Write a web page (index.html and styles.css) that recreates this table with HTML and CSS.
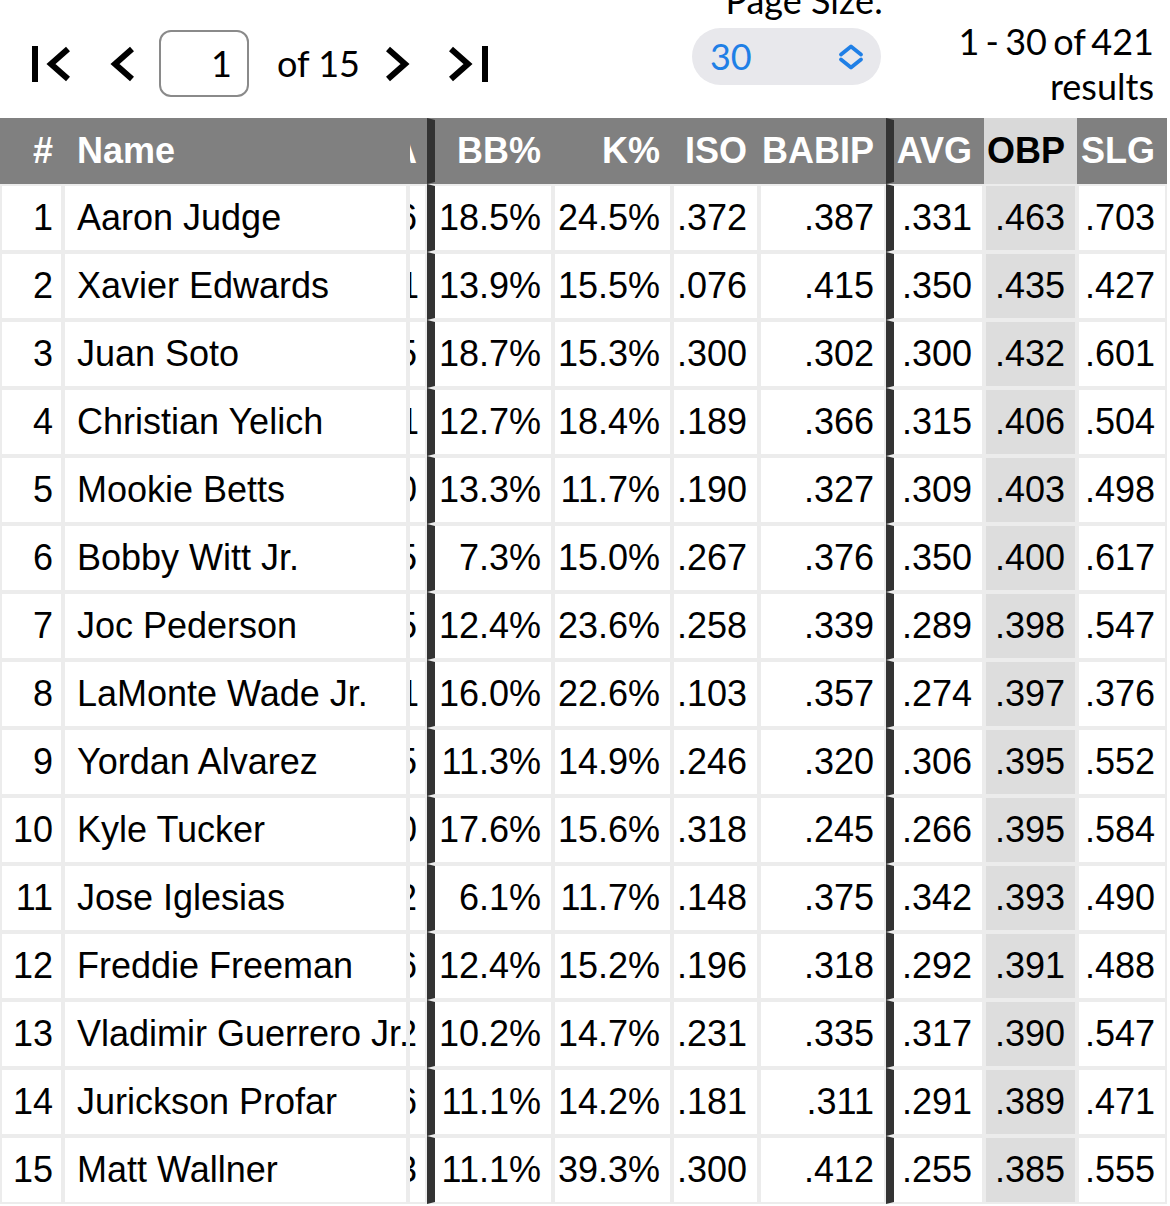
FILE: index.html
```html
<!DOCTYPE html>
<html lang="en">
<head>
<meta charset="utf-8">
<title>Leaderboard</title>
<link rel="stylesheet" href="styles.css">
</head>
<body>
<div class="topbar">
  <div class="pager">
    <svg class="ico ico-first" width="38" height="36" viewBox="0 0 38 36"><rect x="0" y="0" width="6" height="36" fill="#000"/><path d="M36 3 L19 18 L36 33" stroke="#000" stroke-width="6" fill="none"/></svg>
    <svg class="ico ico-prev" width="24" height="36" viewBox="0 0 24 36"><path d="M22 3 L5 18 L22 33" stroke="#000" stroke-width="6" fill="none"/></svg>
    <div class="pagebox">1</div>
    <span class="of">of 15</span>
    <svg class="ico ico-next" width="24" height="36" viewBox="0 0 24 36"><path d="M2 3 L19 18 L2 33" stroke="#000" stroke-width="6" fill="none"/></svg>
    <svg class="ico ico-last" width="39" height="36" viewBox="0 0 39 36"><path d="M2 3 L19 18 L2 33" stroke="#000" stroke-width="6" fill="none"/><rect x="33" y="0" width="6" height="36" fill="#000"/></svg>
  </div>
  <div class="pagesize">
    <div class="ps-label">Page Size:</div>
    <div class="ps-select">
      <span class="ps-value">30</span>
      <svg class="ps-chev" width="26" height="26" viewBox="0 0 26 26"><path d="M3 10.5 L13 2.5 L23 10.5 M3 15.5 L13 23.5 L23 15.5" stroke="#1f7fe6" stroke-width="3.8" fill="none" stroke-linecap="round" stroke-linejoin="round"/></svg>
    </div>
  </div>
  <div class="results">1 - 30 of 421<br>results</div>
</div>

<table class="board">
  <thead>
    <tr>
      <th class="c-rank">#</th>
      <th class="c-name">Name</th>
      <th class="c-cut"><div class="clip"><span>PA</span></div></th>
      <th class="c-bb grp">BB%</th>
      <th class="c-k">K%</th>
      <th class="c-iso">ISO</th>
      <th class="c-babip">BABIP</th>
      <th class="c-avg grp">AVG</th>
      <th class="c-obp sel">OBP</th>
      <th class="c-slg">SLG</th>
    </tr>
  </thead>
  <tbody>
    <tr><td class="c-rank">1</td><td class="c-name">Aaron Judge</td><td class="c-cut"><div class="clip"><span>556</span></div></td><td class="grp">18.5%</td><td>24.5%</td><td>.372</td><td>.387</td><td class="grp">.331</td><td class="sel">.463</td><td>.703</td></tr>
    <tr><td class="c-rank">2</td><td class="c-name">Xavier Edwards</td><td class="c-cut"><div class="clip one"><span>301</span></div></td><td class="grp">13.9%</td><td>15.5%</td><td>.076</td><td>.415</td><td class="grp">.350</td><td class="sel">.435</td><td>.427</td></tr>
    <tr><td class="c-rank">3</td><td class="c-name">Juan Soto</td><td class="c-cut"><div class="clip"><span>575</span></div></td><td class="grp">18.7%</td><td>15.3%</td><td>.300</td><td>.302</td><td class="grp">.300</td><td class="sel">.432</td><td>.601</td></tr>
    <tr><td class="c-rank">4</td><td class="c-name">Christian Yelich</td><td class="c-cut"><div class="clip one"><span>271</span></div></td><td class="grp">12.7%</td><td>18.4%</td><td>.189</td><td>.366</td><td class="grp">.315</td><td class="sel">.406</td><td>.504</td></tr>
    <tr><td class="c-rank">5</td><td class="c-name">Mookie Betts</td><td class="c-cut"><div class="clip"><span>330</span></div></td><td class="grp">13.3%</td><td>11.7%</td><td>.190</td><td>.327</td><td class="grp">.309</td><td class="sel">.403</td><td>.498</td></tr>
    <tr><td class="c-rank">6</td><td class="c-name">Bobby Witt Jr.</td><td class="c-cut"><div class="clip"><span>535</span></div></td><td class="grp">7.3%</td><td>15.0%</td><td>.267</td><td>.376</td><td class="grp">.350</td><td class="sel">.400</td><td>.617</td></tr>
    <tr><td class="c-rank">7</td><td class="c-name">Joc Pederson</td><td class="c-cut"><div class="clip"><span>275</span></div></td><td class="grp">12.4%</td><td>23.6%</td><td>.258</td><td>.339</td><td class="grp">.289</td><td class="sel">.398</td><td>.547</td></tr>
    <tr><td class="c-rank">8</td><td class="c-name">LaMonte Wade Jr.</td><td class="c-cut"><div class="clip one"><span>301</span></div></td><td class="grp">16.0%</td><td>22.6%</td><td>.103</td><td>.357</td><td class="grp">.274</td><td class="sel">.397</td><td>.376</td></tr>
    <tr><td class="c-rank">9</td><td class="c-name">Yordan Alvarez</td><td class="c-cut"><div class="clip"><span>435</span></div></td><td class="grp">11.3%</td><td>14.9%</td><td>.246</td><td>.320</td><td class="grp">.306</td><td class="sel">.395</td><td>.552</td></tr>
    <tr><td class="c-rank">10</td><td class="c-name">Kyle Tucker</td><td class="c-cut"><div class="clip"><span>290</span></div></td><td class="grp">17.6%</td><td>15.6%</td><td>.318</td><td>.245</td><td class="grp">.266</td><td class="sel">.395</td><td>.584</td></tr>
    <tr><td class="c-rank">11</td><td class="c-name">Jose Iglesias</td><td class="c-cut"><div class="clip"><span>312</span></div></td><td class="grp">6.1%</td><td>11.7%</td><td>.148</td><td>.375</td><td class="grp">.342</td><td class="sel">.393</td><td>.490</td></tr>
    <tr><td class="c-rank">12</td><td class="c-name">Freddie Freeman</td><td class="c-cut"><div class="clip"><span>506</span></div></td><td class="grp">12.4%</td><td>15.2%</td><td>.196</td><td>.318</td><td class="grp">.292</td><td class="sel">.391</td><td>.488</td></tr>
    <tr><td class="c-rank">13</td><td class="c-name">Vladimir Guerrero Jr.</td><td class="c-cut"><div class="clip"><span>582</span></div></td><td class="grp">10.2%</td><td>14.7%</td><td>.231</td><td>.335</td><td class="grp">.317</td><td class="sel">.390</td><td>.547</td></tr>
    <tr><td class="c-rank">14</td><td class="c-name">Jurickson Profar</td><td class="c-cut"><div class="clip"><span>536</span></div></td><td class="grp">11.1%</td><td>14.2%</td><td>.181</td><td>.311</td><td class="grp">.291</td><td class="sel">.389</td><td>.471</td></tr>
    <tr><td class="c-rank">15</td><td class="c-name">Matt Wallner</td><td class="c-cut"><div class="clip"><span>193</span></div></td><td class="grp">11.1%</td><td>39.3%</td><td>.300</td><td>.412</td><td class="grp">.255</td><td class="sel">.385</td><td>.555</td></tr>
  </tbody>
</table>
</body>
</html>
```
FILE: styles.css
```css
html, body {
  margin: 0;
  padding: 0;
  background: #fff;
}
body {
  width: 1170px;
  height: 1206px;
  overflow: hidden;
  color: #000;
}

/* ---------- top bar ---------- */
.topbar {
  display: flex;
  align-items: flex-start;
  height: 118px;
  font-family: Lato, "Open Sans", sans-serif;
  font-size: 36px;
  line-height: 45px;
}
.pager {
  display: flex;
  align-items: center;
  height: 109px;
  padding-top: 9px;
  padding-left: 32px;
}
.ico { display: block; flex: none; }
.ico-prev { margin-left: 40px; }
.pagebox {
  margin-left: 25px;
  width: 90px;
  height: 67px;
  box-sizing: border-box;
  border: 2px solid #8a8a8a;
  border-radius: 12px;
  display: flex;
  align-items: center;
  justify-content: flex-end;
  padding-right: 15px;
}
.of { margin-left: 28px; white-space: nowrap; }
.ico-next { margin-left: 26px; }
.ico-last { margin-left: 39px; }

.pagesize {
  margin-left: 204px;
  margin-top: -22px;
  width: 191px;
  display: flex;
  flex-direction: column;
  align-items: flex-end;
}
.ps-label { white-space: nowrap; }
.ps-select {
  margin-top: 5px;
  margin-right: 2px;
  width: 189px;
  height: 57px;
  box-sizing: border-box;
  border-radius: 29px;
  background: #e8e8ec;
  display: flex;
  align-items: center;
  padding-left: 18px;
  padding-right: 17px;
  color: #1f7fe6;
}
.ps-chev { margin-left: auto; display: block; flex: none; width: 26px; height: 26px; }
.results {
  margin-left: auto;
  margin-top: 19px;
  padding-right: 16px;
  text-align: right;
  white-space: nowrap;
  word-spacing: -3px;
}

/* ---------- table ---------- */
.board {
  table-layout: fixed;
  border-collapse: separate;
  border-spacing: 0;
  width: 1167px;
  font-family: "Liberation Sans", Arial, sans-serif;
  font-size: 36px;
}
.board th, .board td {
  box-sizing: border-box;
  padding: 0 10px 0 0;
  text-align: right;
  white-space: nowrap;
  vertical-align: middle;
}
.board th {
  background: #808080;
  color: #fff;
  font-weight: bold;
  border: 2px solid transparent;
  line-height: 62px;
}
.board td {
  background: #fff;
  border: 2px solid #ececec;
  line-height: 64px;
  height: 68px;
}

.board .c-rank { width: 63px; padding-right: 8px; }
.board .c-name { width: 345px; text-align: left; padding: 0 0 0 12px; }
.board .c-cut { width: 19px; padding: 0; }
.board .c-bb { width: 126px; }
.board .c-k { width: 119px; }
.board .c-iso { width: 87px; }
.board .c-babip { width: 127px; }
.board .c-avg { width: 98px; }
.board .c-obp { width: 93px; }
.board .c-slg { width: 90px; }

.board .grp { border-left: 8px solid #333; }
.board th.sel { background: #d9d9d9; color: #000; }
.board td.sel { background: #dddddd; }

.clip {
  display: flex;
  justify-content: flex-end;
  overflow: hidden;
  padding-right: 8px;
}
.clip.one { padding-right: 6px; }
.clip span { flex: none; }
```
